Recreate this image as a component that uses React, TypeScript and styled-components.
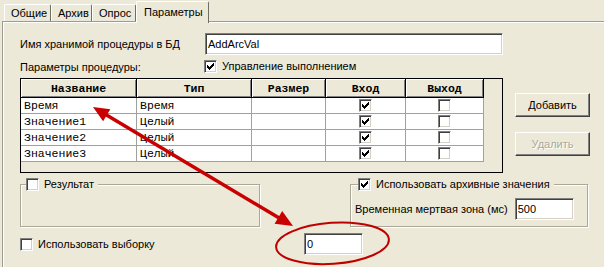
import React from "react";
import styled, { createGlobalStyle } from "styled-components";

const Global = createGlobalStyle`
  html, body { margin: 0; padding: 0; background: #ECE9D8; }
  body { font-family: "Liberation Sans", Arial, sans-serif; font-size: 11px; color: #000; }
  * { box-sizing: border-box; }
`;

const Screen = styled.div`
  position: relative;
  width: 604px;
  height: 267px;
  overflow: hidden;
  background: #ECE9D8;
`;

const TabStrip = styled.div`
  display: flex;
  align-items: flex-end;
  height: 21px;
  padding-left: 4px;
`;

const Tab = styled.div<{ $w: number; $active?: boolean }>`
  position: relative;
  width: ${(p) => p.$w}px;
  height: ${(p) => (p.$active ? 22 : 17)}px;
  margin-bottom: ${(p) => (p.$active ? -2 : 0)}px;
  z-index: ${(p) => (p.$active ? 2 : 1)};
  padding: 0 0 ${(p) => (p.$active ? 2 : 0)}px ${(p) => (p.$active ? 7 : 6)}px;
  display: flex;
  align-items: center;
  background: #ECE9D8;
  border-top: 1px solid #fff;
  border-left: 1px solid #fff;
  border-right: 1px solid #716F64;
  border-radius: 2px 2px 0 0;
  white-space: nowrap;
`;

const Panel = styled.div`
  margin-left: 2px;
  height: 246px;
  border-top: 1px solid #9D9B90;
  border-left: 1px solid #9D9B90;
  box-shadow: inset 0 1px 0 #fff, inset 1px 0 0 #fff;
  padding: 11px 0 0 17px;
`;

const Row = styled.div<{ $mt?: number; $h?: number }>`
  display: flex;
  align-items: center;
  margin-top: ${(p) => p.$mt ?? 0}px;
  height: ${(p) => (p.$h ? `${p.$h}px` : "auto")};
`;

const FieldLabel = styled.span<{ $w?: number }>`
  width: ${(p) => (p.$w ? `${p.$w}px` : "auto")};
  flex: none;
  white-space: nowrap;
`;

const TextBox = styled.input<{ $w: number }>`
  width: ${(p) => p.$w}px;
  height: 22px;
  flex: none;
  margin: 0;
  padding: 0 2px;
  background: #fff;
  border-top: 1px solid #808080;
  border-left: 1px solid #808080;
  border-right: 1px solid #fff;
  border-bottom: 1px solid #fff;
  box-shadow: inset 1px 1px 0 #404040, inset -1px -1px 0 #D4D0C8;
  font-family: "Liberation Sans", Arial, sans-serif;
  font-size: 11px;
  color: #000;
  outline: none;
`;

const Box = styled.span`
  display: inline-block;
  width: 13px;
  height: 13px;
  flex: none;
  background: #fff;
  border-top: 1px solid #808080;
  border-left: 1px solid #808080;
  border-right: 1px solid #fff;
  border-bottom: 1px solid #fff;
  box-shadow: inset 1px 1px 0 #404040, inset -1px -1px 0 #D4D0C8;
  position: relative;
`;

const CheckGlyph = styled.svg`
  position: absolute;
  left: 2px;
  top: 2px;
`;

const CheckBox = ({ checked }: { checked?: boolean }) => (
  <Box>
    {checked && (
      <CheckGlyph width="7" height="7" viewBox="0 0 7 7" shapeRendering="crispEdges">
        <path
          d="M0 2h1v3h-1z M1 3h1v3h-1z M2 4h1v3h-1z M3 3h1v3h-1z M4 2h1v3h-1z M5 1h1v3h-1z M6 0h1v3h-1z"
          fill="#000"
        />
      </CheckGlyph>
    )}
  </Box>
);

const CheckLabel = styled.label<{ $w?: number }>`
  display: flex;
  align-items: center;
  gap: 5px;
  width: ${(p) => (p.$w ? `${p.$w}px` : "auto")};
  flex: none;
  white-space: nowrap;
  line-height: 13px;
`;

const Middle = styled.div`
  display: flex;
  margin-top: 5px;
`;

const Table = styled.div`
  width: 483px;
  height: 95px;
  flex: none;
  border: 1px solid #000;
  background: #ECE9D8;
  display: grid;
  grid-template-columns: 116px 115px 74px 80px 78px;
  grid-template-rows: 19px repeat(4, 16px);
  align-content: start;
`;

const HeadCell = styled.div`
  display: flex;
  align-items: center;
  justify-content: center;
  border-right: 1px solid #000;
  border-bottom: 1px solid #000;
  box-shadow: inset 1px 1px 0 #fff, inset -1px -1px 0 #808080;
  font-family: "Liberation Mono", "Courier New", monospace;
  font-weight: bold;
  font-size: 11.5px;
`;

const Cell = styled.div<{ $center?: boolean }>`
  display: flex;
  align-items: center;
  justify-content: ${(p) => (p.$center ? "center" : "flex-start")};
  padding-left: ${(p) => (p.$center ? 0 : 3)}px;
  background: #fff;
  border-right: 1px solid #A0A0A0;
  border-bottom: 1px solid #A0A0A0;
  font-family: "Liberation Mono", "Courier New", monospace;
  font-size: 11.5px;
  white-space: nowrap;
  overflow: hidden;
`;

const ButtonCol = styled.div`
  display: flex;
  flex-direction: column;
  gap: 15px;
  margin-left: 12px;
  padding-top: 15px;
`;

const Button = styled.button<{ $disabled?: boolean }>`
  width: 75px;
  height: 24px;
  margin: 0;
  padding: 0;
  background: #ECE9D8;
  border-top: 1px solid #fff;
  border-left: 1px solid #fff;
  border-right: 1px solid #404040;
  border-bottom: 1px solid #404040;
  box-shadow: inset -1px -1px 0 #808080;
  font-family: "Liberation Sans", Arial, sans-serif;
  font-size: 11px;
  color: ${(p) => (p.$disabled ? "#ACA899" : "#000")};
  text-shadow: ${(p) => (p.$disabled ? "1px 1px 0 #fff" : "none")};
`;

const Bottom = styled.div`
  display: flex;
  margin-top: 5px;
`;

const Group = styled.fieldset<{ $w: number; $pl: number; $ml?: number }>`
  width: ${(p) => p.$w}px;
  height: 49px;
  flex: none;
  min-width: 0;
  margin: 0 0 0 ${(p) => p.$ml ?? 0}px;
  padding: 7px 0 0 ${(p) => p.$pl}px;
  border: 1px solid #ACA899;
  box-shadow: inset 1px 1px 0 #fff, 1px 1px 0 #fff;
`;

const Legend = styled.legend<{ $ml?: number }>`
  display: flex;
  align-items: center;
  gap: 5px;
  margin-left: ${(p) => p.$ml ?? 0}px;
  padding: 0 4px 0 0;
  line-height: 13px;
  background: #ECE9D8;
  white-space: nowrap;
`;

const GroupRow = styled.div`
  display: flex;
  align-items: center;
  gap: 7px;
`;

const Overlay = styled.svg`
  position: absolute;
  left: 0;
  top: 0;
  pointer-events: none;
  z-index: 5;
`;

const rows = [
  ["Время", "Время"],
  ["Значение1", "Целый"],
  ["Значение2", "Целый"],
  ["Значение3", "Целый"],
];

export default function App() {
  return (
    <>
      <Global />
      <Screen>
        <TabStrip>
          <Tab $w={47}>Общие</Tab>
          <Tab $w={41}>Архив</Tab>
          <Tab $w={44}>Опрос</Tab>
          <Tab $w={73} $active>
            Параметры
          </Tab>
        </TabStrip>
        <Panel>
          <Row $h={22}>
            <FieldLabel $w={185}>Имя хранимой процедуры в БД</FieldLabel>
            <TextBox $w={298} readOnly value="AddArcVal" />
          </Row>
          <Row $mt={5} $h={13}>
            <FieldLabel $w={184}>Параметры процедуры:</FieldLabel>
            <CheckLabel>
              <CheckBox checked />
              Управление выполнением
            </CheckLabel>
          </Row>
          <Middle>
            <Table>
              <HeadCell>Название</HeadCell>
              <HeadCell>Тип</HeadCell>
              <HeadCell>Размер</HeadCell>
              <HeadCell>Вход</HeadCell>
              <HeadCell>Выход</HeadCell>
              {rows.map(([name, type]) => (
                <React.Fragment key={name}>
                  <Cell>{name}</Cell>
                  <Cell>{type}</Cell>
                  <Cell />
                  <Cell $center>
                    <CheckBox checked />
                  </Cell>
                  <Cell $center>
                    <CheckBox />
                  </Cell>
                </React.Fragment>
              ))}
            </Table>
            <ButtonCol>
              <Button>Добавить</Button>
              <Button $disabled disabled>
                Удалить
              </Button>
            </ButtonCol>
          </Middle>
          <Bottom>
            <Group $w={240} $pl={5}>
              <Legend>
                <CheckBox />
                Результат
              </Legend>
            </Group>
            <Group $w={238} $pl={4} $ml={90}>
              <Legend $ml={3}>
                <CheckBox checked />
                Использовать архивные значения
              </Legend>
              <GroupRow>
                <FieldLabel>Временная мертвая зона (мс)</FieldLabel>
                <TextBox $w={59} readOnly value="500" />
              </GroupRow>
            </Group>
          </Bottom>
          <Row $mt={6} $h={22}>
            <CheckLabel $w={284}>
              <CheckBox />
              Использовать выборку
            </CheckLabel>
            <TextBox $w={59} readOnly value="0" />
          </Row>
        </Panel>
        <Overlay width="604" height="267" viewBox="0 0 604 267">
          <line x1="104" y1="113.5" x2="280" y2="218.5" stroke="#C80000" strokeWidth="3.5" />
          <polygon points="93,107 103.1,121.2 110.3,109.2" fill="#C80000" />
          <polygon points="293,226 274.6,223.7 282.2,210.9" fill="#C80000" />
          <ellipse
            cx="332.5"
            cy="243.3"
            rx="56.5"
            ry="20.5"
            fill="none"
            stroke="#C00000"
            strokeWidth="2"
            transform="rotate(-4 332.5 243.3)"
          />
        </Overlay>
      </Screen>
    </>
  );
}
